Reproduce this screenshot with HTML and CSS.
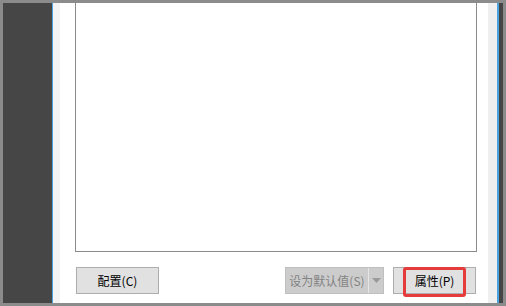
FILE: index.html
```html
<!DOCTYPE html>
<html>
<head>
<meta charset="utf-8">
<link rel="stylesheet" href="styles.css">
</head>
<body>
<div class="frame">
  <div class="side-dark"></div>
  <div class="edge-blue"></div>
  <div class="strip-left"></div>
  <div class="content">
    <div class="listbox"></div>
    <div class="button-row">
      <button class="btn btn-config">配置(C)</button>
      <div class="spacer"></div>
      <div class="split disabled">
        <span class="split-main">设为默认值(S)</span>
        <span class="split-arrow"><svg width="9" height="5" viewBox="0 0 9 5"><path d="M0 0 H9 L4.5 5 Z" fill="#9a9a9a"/></svg></span>
      </div>
      <button class="btn btn-props">属性(P)<span class="highlight"></span></button>
    </div>
  </div>
  <div class="strip-right"></div>
  <div class="edge-blue2"></div>
  <div class="side-dark-right"></div>
</div>
</body>
</html>
```

FILE: styles.css
```css
html, body {
  margin: 0;
  padding: 0;
}
body {
  width: 506px;
  height: 306px;
  overflow: hidden;
  font-family: "Noto Sans CJK SC", "Noto Sans", sans-serif;
}
.frame {
  box-sizing: border-box;
  width: 506px;
  height: 306px;
  padding: 3px 3px 3px 3px;
  background: #8b8b8b;
  display: flex;
}
.side-dark {
  width: 49px;
  background: #464646;
}
.edge-blue {
  width: 1px;
  background: #4aa3df;
}
.strip-left {
  width: 7px;
  background: #f3f3f3;
}
.content {
  flex: 1;
  background: #ffffff;
  padding: 0 11px 0 15px;
  display: flex;
  flex-direction: column;
}
.listbox {
  height: 249px;
  box-sizing: border-box;
  border: 1px solid #8a8a8a;
  border-top: none;
}
.button-row {
  margin-top: 15px;
  height: 27px;
  display: flex;
  padding-left: 1px;
}
.spacer {
  flex: 1;
}
.btn {
  box-sizing: border-box;
  height: 27px;
  width: 83px;
  margin: 0;
  padding: 0;
  border: 1px solid #adadad;
  background: #e1e1e1;
  font-family: "Noto Sans CJK SC", "Noto Sans", sans-serif;
  font-size: 12px;
  color: #000;
  display: flex;
  align-items: center;
  justify-content: center;
}
.split {
  box-sizing: border-box;
  height: 27px;
  width: 99px;
  display: flex;
  border: 1px solid #bfbfbf;
  background: #cccccc;
  font-size: 12px;
  color: #838383;
}
.split-main {
  width: 82px;
  display: flex;
  align-items: center;
  justify-content: center;
  border-right: 1px solid #e6e6e6;
}
.split-arrow {
  flex: 1;
  display: flex;
  align-items: center;
  justify-content: center;
}
.btn-props {
  margin-left: 9px;
  margin-right: 1px;
  position: relative;
}
.highlight {
  position: absolute;
  left: 9px;
  top: -1px;
  width: 63px;
  height: 30px;
  box-sizing: border-box;
  border: 3px solid #e53b3b;
  border-radius: 3px;
}
.strip-right {
  width: 9px;
  background: #efefef;
}
.edge-blue2 {
  width: 2px;
  background: #4aa3df;
}
.side-dark-right {
  width: 4px;
  background: #464646;
}
```
